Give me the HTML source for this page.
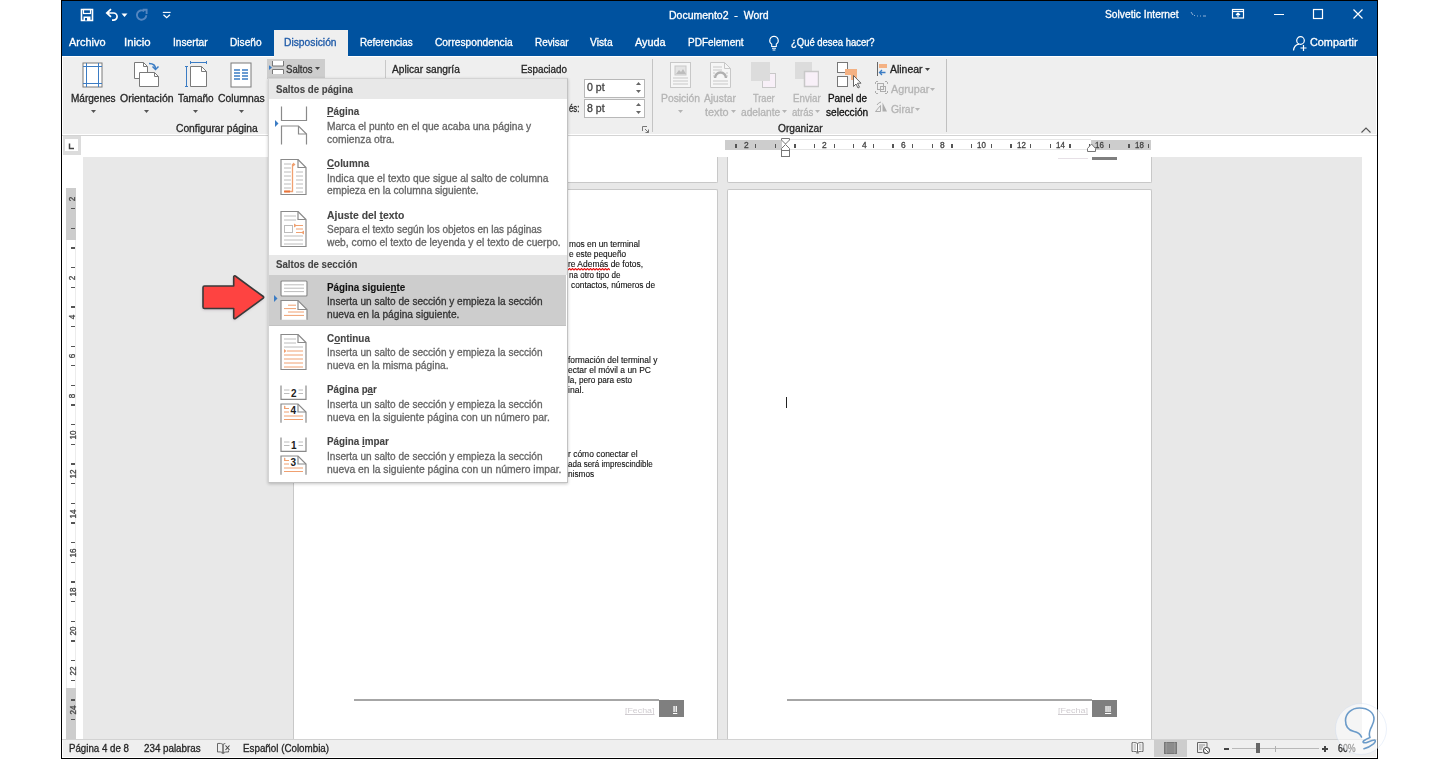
<!DOCTYPE html>
<html lang="es"><head><meta charset="utf-8"><title>Documento2 - Word</title>
<style>
html,body{margin:0;padding:0;background:#fff;}
body{width:1440px;height:759px;position:relative;overflow:hidden;font-family:"Liberation Sans", sans-serif;}
.r{position:absolute;display:block;}
.t{position:absolute;display:block;white-space:pre;line-height:16px;transform-origin:0 50%;font-family:"Liberation Sans", sans-serif;-webkit-text-stroke:0.3px;}
u{text-decoration:underline;text-underline-offset:1px;}
</style></head><body>
<div class="r" style="left:61px;top:0px;width:1317px;height:759px;background:#000;"></div>
<div class="r" style="left:62px;top:1px;width:1315px;height:757px;background:#fff;"></div>
<div class="r" style="left:62px;top:1px;width:1315px;height:55px;background:#00529f;"></div>
<div class="r" style="left:63px;top:57px;width:1313px;height:77px;background:#efefef;"></div>
<div class="r" style="left:62px;top:135px;width:1315px;height:1px;background:#d4d4d4;"></div>
<div class="r" style="left:83px;top:157px;width:1279px;height:582px;background:#e8e8e8;"></div>
<div class="r" style="left:62px;top:738.5px;width:1315px;height:1.5px;background:#d2d2d2;"></div>
<div class="r" style="left:63px;top:740px;width:1313px;height:17px;background:#efefef;"></div>
<span class="t" style="left:668.70px;top:7.54px;font-size:10px;color:#fff;transform:scaleX(1.0500);">Documento2  -  Word</span>
<span class="t" style="left:1104.70px;top:7.34px;font-size:10px;color:#fff;transform:scaleX(1.0262);">Solvetic Internet</span>
<svg class="r" style="left:80px;top:8px;" width="14" height="14" viewBox="0 0 14 14"><path d="M1.5 1.5h11v11h-11z" fill="none" stroke="#fff" stroke-width="1.6"/><rect x="3.5" y="1.5" width="7" height="4" fill="none" stroke="#fff" stroke-width="1.2"/><rect x="3.5" y="8.5" width="7" height="4" fill="#fff"/><rect x="5" y="10" width="2" height="2.5" fill="#00529f"/></svg>
<svg class="r" style="left:105px;top:8px;" width="14" height="14" viewBox="0 0 14 14"><path d="M6 1.2 L1.8 5 L6 8.8 M2 5 H8.5 A3.6 3.6 0 0 1 8.5 12.2 H7" fill="none" stroke="#fff" stroke-width="1.7"/></svg>
<svg class="r" style="left:121px;top:13px;" width="7" height="5" viewBox="0 0 7 5"><path d="M0.5 0.5h6l-3 3.5z" fill="#fff"/></svg>
<svg class="r" style="left:135px;top:8px;" width="14" height="14" viewBox="0 0 14 14"><path d="M9.300 3.200A4.700 4.700 0 1 0 11.300 7.300" fill="none" stroke="#5486c0" stroke-width="1.900"/><path d="M7.600 1.800h4v4.200" fill="none" stroke="#5486c0" stroke-width="1.900"/></svg>
<svg class="r" style="left:162px;top:11px;" width="10" height="8" viewBox="0 0 10 8"><path d="M0.800 1.400h7.800" stroke="#fff" stroke-width="1.100"/><path d="M1.500 3.800l3.200 2.900l3.200-2.900" fill="none" stroke="#fff" stroke-width="1.300"/></svg>
<svg class="r" style="left:1231px;top:8px;" width="14" height="12" viewBox="0 0 14 12"><rect x="1.5" y="1.5" width="11" height="8.5" fill="none" stroke="#fff" stroke-width="1.2"/><path d="M1.5 3.5h11" stroke="#fff" stroke-width="1.2"/><path d="M7 9v-3.500M5 7l2-2l2 2" fill="none" stroke="#fff" stroke-width="1.200"/></svg>
<div class="r" style="left:1274px;top:14px;width:10px;height:1px;background:#fff;"></div>
<svg class="r" style="left:1312px;top:8px;" width="12" height="12" viewBox="0 0 12 12"><rect x="1.5" y="1.5" width="9" height="9" fill="none" stroke="#fff" stroke-width="1.2"/></svg>
<svg class="r" style="left:1352px;top:8px;" width="12" height="12" viewBox="0 0 12 12"><path d="M1.5 1.5l9 9M10.5 1.5l-9 9" stroke="#fff" stroke-width="1.2"/></svg>
<svg class="r" style="left:1190px;top:11px;" width="18" height="7" viewBox="0 0 18 7"><path d="M1 1l2 3M4 4l1 1M7 5h1M10 5h1M13 5h3" stroke="#8fb0d6" stroke-width="1"/></svg>
<div class="r" style="left:274px;top:30px;width:74px;height:27px;background:#efefef;"></div>
<span class="t" style="left:68.70px;top:35.13px;font-size:10px;color:#fff;transform:scaleX(1.0971);">Archivo</span>
<span class="t" style="left:123.70px;top:35.13px;font-size:10px;color:#fff;transform:scaleX(1.1387);">Inicio</span>
<span class="t" style="left:172.70px;top:35.13px;font-size:10px;color:#fff;transform:scaleX(1.0205);">Insertar</span>
<span class="t" style="left:229.70px;top:35.13px;font-size:10px;color:#fff;transform:scaleX(1.0148);">Diseño</span>
<span class="t" style="left:359.70px;top:35.13px;font-size:10px;color:#fff;transform:scaleX(0.9858);">Referencias</span>
<span class="t" style="left:434.70px;top:35.13px;font-size:10px;color:#fff;transform:scaleX(1.0187);">Correspondencia</span>
<span class="t" style="left:534.70px;top:35.13px;font-size:10px;color:#fff;transform:scaleX(0.9910);">Revisar</span>
<span class="t" style="left:589.70px;top:35.13px;font-size:10px;color:#fff;transform:scaleX(1.0244);">Vista</span>
<span class="t" style="left:634.70px;top:35.13px;font-size:10px;color:#fff;transform:scaleX(1.0856);">Ayuda</span>
<span class="t" style="left:687.70px;top:35.13px;font-size:10px;color:#fff;transform:scaleX(1.0004);">PDFelement</span>
<span class="t" style="left:790.70px;top:35.13px;font-size:10px;color:#fff;transform:scaleX(0.9458);">¿Qué desea hacer?</span>
<span class="t" style="left:1309.70px;top:35.13px;font-size:10px;color:#fff;transform:scaleX(1.0841);">Compartir</span>
<span class="t" style="left:283.70px;top:35.13px;font-size:10px;color:#1e5aa8;transform:scaleX(1.0285);">Disposición</span>
<svg class="r" style="left:767.5px;top:35.3px;" width="12" height="17" viewBox="0 0 12 17"><path d="M6 1.2a4.3 4.3 0 0 0-2.3 7.9v2.4h4.6v-2.4A4.3 4.3 0 0 0 6 1.2z" fill="none" stroke="#fff" stroke-width="1.1"/><path d="M4 13.2h4M4.6 15h2.8" stroke="#fff" stroke-width="1.1"/></svg>
<svg class="r" style="left:1292px;top:35px;" width="16" height="17" viewBox="0 0 16 17"><circle cx="8.5" cy="5.5" r="3.8" fill="none" stroke="#fff" stroke-width="1.2"/><path d="M1.5 15.5c0.5-4 3-6 5.5-6.3" fill="none" stroke="#fff" stroke-width="1.2"/><path d="M11.5 10v6M8.5 13h6" stroke="#fff" stroke-width="1.2"/></svg>
<svg class="r" style="left:82px;top:62px;" width="21" height="26" viewBox="0 0 21 26"><rect x="1" y="1" width="19" height="24" fill="#fff" stroke="#7a7a7a" stroke-width="1"/><path d="M4.5 1v24M16.5 1v24M1 4.5h19M1 21.5h19" stroke="#3b7cc4" stroke-width="1" fill="none"/></svg>
<svg class="r" style="left:133px;top:61px;" width="27" height="27" viewBox="0 0 27 27"><path d="M1.5 1.5h9l4 4v12h-13z" fill="#fff" stroke="#7a7a7a"/><path d="M10.5 1.5v4h4" fill="none" stroke="#7a7a7a"/><path d="M6.500 11.500h15l4 4v10h-19z" fill="#fff" stroke="#7a7a7a"/><path d="M21.500 11.500v4h4" fill="none" stroke="#7a7a7a"/><path d="M16 2.500c4 0 6.500 1.500 6.500 5.500" fill="none" stroke="#3b7cc4" stroke-width="1.5"/><path d="M19.500 5.500l3 3l3-3" fill="none" stroke="#3b7cc4" stroke-width="1.500"/></svg>
<svg class="r" style="left:185px;top:61px;" width="23" height="27" viewBox="0 0 23 27"><path d="M5.500 5.500h11l5 5v15h-16z" fill="#fff" stroke="#7a7a7a"/><path d="M16.500 5.500v5h5" fill="none" stroke="#7a7a7a"/><path d="M5 1.500h17M5.500 0v3M21.500 0v3M1.500 5v21M0 5.500h3M0 25.500h3" stroke="#3b7cc4" fill="none"/></svg>
<svg class="r" style="left:230px;top:62px;" width="22" height="26" viewBox="0 0 22 26"><rect x="1" y="1" width="20" height="24" fill="#fff" stroke="#7a7a7a"/><path d="M4 8h6M4 11h6M4 14h6M4 17h6M12 8h6M12 11h6M12 14h6M12 17h6" stroke="#3b7cc4" stroke-width="1.4"/></svg>
<span class="t" style="left:70.70px;top:91.03px;font-size:10px;color:#262626;transform:scaleX(1.0030);">Márgenes</span>
<svg class="r" style="left:90.8px;top:110.2px;" width="5" height="3" viewBox="0 0 5 3"><path d="M0 0h5l-2.5 3z" fill="#555"/></svg>
<span class="t" style="left:119.70px;top:91.03px;font-size:10px;color:#262626;transform:scaleX(1.0481);">Orientación</span>
<svg class="r" style="left:143.8px;top:110.2px;" width="5" height="3" viewBox="0 0 5 3"><path d="M0 0h5l-2.5 3z" fill="#555"/></svg>
<span class="t" style="left:177.70px;top:91.03px;font-size:10px;color:#262626;transform:scaleX(1.0006);">Tamaño</span>
<svg class="r" style="left:193.0px;top:110.2px;" width="5" height="3" viewBox="0 0 5 3"><path d="M0 0h5l-2.5 3z" fill="#555"/></svg>
<span class="t" style="left:217.70px;top:91.03px;font-size:10px;color:#262626;transform:scaleX(1.0348);">Columnas</span>
<svg class="r" style="left:238.8px;top:110.2px;" width="5" height="3" viewBox="0 0 5 3"><path d="M0 0h5l-2.5 3z" fill="#555"/></svg>
<span class="t" style="left:175.70px;top:120.94px;font-size:10px;color:#262626;transform:scaleX(1.0264);">Configurar página</span>
<div class="r" style="left:267px;top:59px;width:58px;height:19.5px;background:#cdcdcd;"></div>
<svg class="r" style="left:269px;top:61px;" width="16" height="14" viewBox="0 0 16 14"><path d="M0 4.200l3 2.400l-3 2.400z" fill="#3b7cc4"/><path d="M3.500 0v5h11v-5M3.500 13v-4.500h11v4.500" fill="#fff" stroke="#777"/></svg>
<span class="t" style="left:285.70px;top:61.93px;font-size:10px;color:#333;transform:scaleX(0.9569);">Saltos</span>
<svg class="r" style="left:314.9px;top:66.8px;" width="5" height="3" viewBox="0 0 5 3"><path d="M0 0h5l-2.5 3z" fill="#444"/></svg>
<div class="r" style="left:385px;top:60px;width:1px;height:19px;background:#c8c8c8;"></div>
<div class="r" style="left:652px;top:59px;width:1px;height:73px;background:#c4c4c4;"></div>
<div class="r" style="left:946px;top:59px;width:1.3px;height:73px;background:#c0c0c0;"></div>
<span class="t" style="left:392.30px;top:61.83px;font-size:10px;color:#262626;transform:scaleX(1.0164);">Aplicar sangría</span>
<span class="t" style="left:520.70px;top:61.83px;font-size:10px;color:#262626;transform:scaleX(0.9849);">Espaciado</span>
<div class="r" style="left:584px;top:78.5px;width:61px;height:19.3px;background:#fff;box-sizing:border-box;border:1px solid #b8b8b8;"></div>
<span class="t" style="left:586.70px;top:80.33px;font-size:10px;color:#444;transform:scaleX(1.0547);">0 pt</span>
<svg class="r" style="left:635.5px;top:82.2px;" width="5" height="3" viewBox="0 0 5 3"><path d="M0 3l2.500-3l2.500 3z" fill="#666"/></svg>
<svg class="r" style="left:635.5px;top:90px;" width="5" height="3" viewBox="0 0 5 3"><path d="M0 0l2.500 3l2.500-3z" fill="#666"/></svg>
<div class="r" style="left:584px;top:99px;width:61px;height:19.3px;background:#fff;box-sizing:border-box;border:1px solid #b8b8b8;"></div>
<span class="t" style="left:586.70px;top:101.33px;font-size:10px;color:#444;transform:scaleX(1.0547);">8 pt</span>
<svg class="r" style="left:635.5px;top:103.2px;" width="5" height="3" viewBox="0 0 5 3"><path d="M0 3l2.500-3l2.500 3z" fill="#666"/></svg>
<svg class="r" style="left:635.5px;top:111px;" width="5" height="3" viewBox="0 0 5 3"><path d="M0 0l2.500 3l2.500-3z" fill="#666"/></svg>
<span class="t" style="left:569.40px;top:101.13px;font-size:10px;color:#262626;transform:scaleX(0.7719);">és:</span>
<svg class="r" style="left:642px;top:126px;" width="7" height="7" viewBox="0 0 7 7"><path d="M0.500 5v-4.500h4.500" fill="none" stroke="#777"/><path d="M3 3l3.500 3.500M6.500 3.500v3h-3" fill="none" stroke="#777"/></svg>
<svg class="r" style="left:670px;top:62px;" width="21" height="26" viewBox="0 0 21 26"><rect x="0.500" y="0.500" width="20" height="25" fill="#f6f6f6" stroke="#c8c8c8"/><rect x="5" y="4" width="11" height="9" fill="#e4e4e4" stroke="#c8c8c8"/><path d="M6 12l3-4l2 2l2-3l3 5z" fill="#bdbdbd"/><path d="M3 16h15M3 19h15M3 22h15" stroke="#c8c8c8"/></svg>
<svg class="r" style="left:710px;top:62px;" width="21" height="26" viewBox="0 0 21 26"><path d="M0.500 0.500h14l6 6v19h-20z" fill="#f6f6f6" stroke="#c8c8c8"/><path d="M14.500 0.500v6h6" fill="none" stroke="#c8c8c8"/><path d="M3 5h9M3 8h9M3 19h15M3 22h15" stroke="#c8c8c8"/><path d="M5 16a5.500 5.500 0 0 1 11 0" fill="none" stroke="#b0b0b0" stroke-width="2.500"/><path d="M3 11h2M16 11h2M3 14h1M17 14h1" stroke="#c8c8c8"/></svg>
<svg class="r" style="left:751px;top:62px;" width="25" height="26" viewBox="0 0 25 26"><rect x="11.500" y="11.500" width="13" height="14" fill="#f8f0f8" stroke="#c8c8c8"/><rect x="0" y="0" width="19" height="19" fill="#dcdcdc"/></svg>
<svg class="r" style="left:795px;top:62px;" width="24" height="26" viewBox="0 0 24 26"><rect x="0" y="0" width="17" height="17" fill="#dcdcdc"/><rect x="9.500" y="9.500" width="14" height="15" fill="#f8f0f8" stroke="#c8c8c8" stroke-width="1.500"/></svg>
<svg class="r" style="left:837px;top:62px;" width="25" height="27" viewBox="0 0 25 27"><rect x="0.500" y="0.500" width="10" height="10" fill="#fff" stroke="#777"/><rect x="0.500" y="14.500" width="10" height="10" fill="#fff" stroke="#777"/><rect x="8" y="7" width="12" height="6" fill="#f4b183"/><rect x="14" y="7" width="6" height="11" fill="#f4b183"/><path d="M16.500 13.500v11l2.500-2.500l2 4l1.500-0.800l-2-4h3.500z" fill="#fff" stroke="#555" stroke-width="0.900"/></svg>
<span class="t" style="left:661.20px;top:91.03px;font-size:10px;color:#b4b4b4;transform:scaleX(1.0340);">Posición</span>
<svg class="r" style="left:678.1px;top:110.0px;" width="5" height="3" viewBox="0 0 5 3"><path d="M0 0h5l-2.5 3z" fill="#b4b4b4"/></svg>
<span class="t" style="left:704.30px;top:91.03px;font-size:10px;color:#b4b4b4;transform:scaleX(1.0217);">Ajustar</span>
<span class="t" style="left:704.70px;top:104.63px;font-size:10px;color:#b4b4b4;transform:scaleX(1.0882);">texto</span>
<svg class="r" style="left:730.8px;top:110.0px;" width="5" height="3" viewBox="0 0 5 3"><path d="M0 0h5l-2.5 3z" fill="#b4b4b4"/></svg>
<span class="t" style="left:753.20px;top:91.03px;font-size:10px;color:#b4b4b4;transform:scaleX(0.9222);">Traer</span>
<span class="t" style="left:740.70px;top:104.63px;font-size:10px;color:#b4b4b4;transform:scaleX(1.0215);">adelante</span>
<svg class="r" style="left:781.5px;top:110.0px;" width="5" height="3" viewBox="0 0 5 3"><path d="M0 0h5l-2.5 3z" fill="#b4b4b4"/></svg>
<span class="t" style="left:793.00px;top:91.03px;font-size:10px;color:#b4b4b4;transform:scaleX(0.9767);">Enviar</span>
<span class="t" style="left:792.40px;top:104.63px;font-size:10px;color:#b4b4b4;transform:scaleX(0.9625);">atrás</span>
<svg class="r" style="left:815.2px;top:110.0px;" width="5" height="3" viewBox="0 0 5 3"><path d="M0 0h5l-2.5 3z" fill="#b4b4b4"/></svg>
<span class="t" style="left:828.20px;top:91.03px;font-size:10px;color:#111;transform:scaleX(0.9903);">Panel de</span>
<span class="t" style="left:826.40px;top:104.63px;font-size:10px;color:#111;transform:scaleX(1.0119);">selección</span>
<svg class="r" style="left:876px;top:62px;" width="11" height="14" viewBox="0 0 11 14"><path d="M1.500 0v14" stroke="#666"/><rect x="3" y="2" width="8" height="4" fill="#f4b183"/><path d="M3.500 10.500h6M6 8l-2.500 2.500l2.500 2.500" fill="none" stroke="#3b7cc4" stroke-width="1.300"/></svg>
<span class="t" style="left:890.30px;top:61.63px;font-size:10px;color:#222;transform:scaleX(1.0437);">Alinear</span>
<svg class="r" style="left:924.5px;top:68.0px;" width="5" height="3" viewBox="0 0 5 3"><path d="M0 0h5l-2.5 3z" fill="#444"/></svg>
<svg class="r" style="left:875px;top:81px;" width="13" height="13" viewBox="0 0 13 13"><rect x="2.500" y="2.500" width="6" height="6" fill="none" stroke="#adadad"/><rect x="5.500" y="5.500" width="5" height="5" fill="none" stroke="#adadad"/><path d="M0.500 3v-2.500h2.500M10 0.500h2.500v2.500M12.500 10v2.500h-2.500M3 12.500h-2.500v-2.500" fill="none" stroke="#adadad" stroke-dasharray="2 1"/></svg>
<span class="t" style="left:890.70px;top:81.73px;font-size:10px;color:#b4b4b4;transform:scaleX(1.0765);">Agrupar</span>
<svg class="r" style="left:929.5px;top:88.0px;" width="5" height="3" viewBox="0 0 5 3"><path d="M0 0h5l-2.5 3z" fill="#b4b4b4"/></svg>
<svg class="r" style="left:875px;top:101px;" width="13" height="12" viewBox="0 0 13 12"><path d="M0.500 10.500h5l0-6z" fill="none" stroke="#adadad"/><path d="M7.500 10.500v-9l4.500 9z" fill="#adadad"/><path d="M2 4a6 6 0 0 1 4-3" fill="none" stroke="#adadad"/></svg>
<span class="t" style="left:890.70px;top:101.53px;font-size:10px;color:#b4b4b4;transform:scaleX(1.0389);">Girar</span>
<svg class="r" style="left:914.5px;top:108.0px;" width="5" height="3" viewBox="0 0 5 3"><path d="M0 0h5l-2.5 3z" fill="#b4b4b4"/></svg>
<span class="t" style="left:777.70px;top:120.74px;font-size:10px;color:#262626;transform:scaleX(1.0158);">Organizar</span>
<svg class="r" style="left:1360.5px;top:126.5px;" width="10" height="6" viewBox="0 0 10 6"><path d="M0.500 5.500l4.500-4.500l4.500 4.500" fill="none" stroke="#555" stroke-width="1.100"/></svg>
<div class="r" style="left:63px;top:136px;width:18px;height:19px;background:#dcdcdc;"></div>
<div class="r" style="left:65px;top:139px;width:13px;height:12px;background:#fff;"></div>
<svg class="r" style="left:68px;top:143px;" width="7" height="7" viewBox="0 0 7 7"><path d="M1.500 0.500v5h4.500" fill="none" stroke="#444" stroke-width="1.500"/></svg>
<div class="r" style="left:725px;top:140px;width:57px;height:10px;background:#cdcdcd;"></div>
<div class="r" style="left:782px;top:139px;width:309px;height:11px;background:#fff;box-sizing:border-box;border-top:1.5px solid #e6e6e6;border-bottom:1px solid #e6e6e6;"></div>
<div class="r" style="left:1091px;top:140px;width:60px;height:10px;background:#cdcdcd;"></div>
<div class="r" style="left:735.27px;top:144px;width:1.3px;height:4.2px;background:#555;"></div>
<div class="r" style="left:754.92px;top:144px;width:1.3px;height:4.2px;background:#555;"></div>
<div class="r" style="left:774.57px;top:144px;width:1.3px;height:4.2px;background:#555;"></div>
<div class="r" style="left:794.23px;top:144px;width:1.3px;height:4.2px;background:#555;"></div>
<div class="r" style="left:813.88px;top:144px;width:1.3px;height:4.2px;background:#555;"></div>
<div class="r" style="left:833.52px;top:144px;width:1.3px;height:4.2px;background:#555;"></div>
<div class="r" style="left:853.17px;top:144px;width:1.3px;height:4.2px;background:#555;"></div>
<div class="r" style="left:872.82px;top:144px;width:1.3px;height:4.2px;background:#555;"></div>
<div class="r" style="left:892.48px;top:144px;width:1.3px;height:4.2px;background:#555;"></div>
<div class="r" style="left:912.12px;top:144px;width:1.3px;height:4.2px;background:#555;"></div>
<div class="r" style="left:931.77px;top:144px;width:1.3px;height:4.2px;background:#555;"></div>
<div class="r" style="left:951.42px;top:144px;width:1.3px;height:4.2px;background:#555;"></div>
<div class="r" style="left:971.07px;top:144px;width:1.3px;height:4.2px;background:#555;"></div>
<div class="r" style="left:990.73px;top:144px;width:1.3px;height:4.2px;background:#555;"></div>
<div class="r" style="left:1010.38px;top:144px;width:1.3px;height:4.2px;background:#555;"></div>
<div class="r" style="left:1030.02px;top:144px;width:1.3px;height:4.2px;background:#555;"></div>
<div class="r" style="left:1049.67px;top:144px;width:1.3px;height:4.2px;background:#555;"></div>
<div class="r" style="left:1069.32px;top:144px;width:1.3px;height:4.2px;background:#555;"></div>
<div class="r" style="left:1088.97px;top:144px;width:1.3px;height:4.2px;background:#555;"></div>
<div class="r" style="left:1108.62px;top:144px;width:1.3px;height:4.2px;background:#555;"></div>
<div class="r" style="left:1128.27px;top:144px;width:1.3px;height:4.2px;background:#555;"></div>
<div class="r" style="left:1147.92px;top:144px;width:1.3px;height:4.2px;background:#555;"></div>
<span class="t" style="left:743.66px;top:137.15px;font-size:8.5px;color:#444;transform:scaleX(0.9877);">2</span>
<span class="t" style="left:822.26px;top:137.15px;font-size:8.5px;color:#444;transform:scaleX(0.9877);">2</span>
<span class="t" style="left:861.56px;top:137.15px;font-size:8.5px;color:#444;transform:scaleX(0.9877);">4</span>
<span class="t" style="left:900.86px;top:137.15px;font-size:8.5px;color:#444;transform:scaleX(0.9877);">6</span>
<span class="t" style="left:940.16px;top:137.15px;font-size:8.5px;color:#444;transform:scaleX(0.9877);">8</span>
<span class="t" style="left:977.38px;top:137.15px;font-size:8.5px;color:#444;transform:scaleX(0.9339);">10</span>
<span class="t" style="left:1016.68px;top:137.15px;font-size:8.5px;color:#444;transform:scaleX(0.9339);">12</span>
<span class="t" style="left:1055.98px;top:137.15px;font-size:8.5px;color:#444;transform:scaleX(0.9339);">14</span>
<span class="t" style="left:1095.28px;top:137.15px;font-size:8.5px;color:#444;transform:scaleX(0.9339);">16</span>
<span class="t" style="left:1134.58px;top:137.15px;font-size:8.5px;color:#444;transform:scaleX(0.9339);">18</span>
<svg class="r" style="left:781px;top:138px;" width="9" height="19" viewBox="0 0 9 19"><path d="M0.500 0.500h8v1.500l-4 4l-4-4z" fill="#fff" stroke="#777"/><path d="M0.500 12.500v-2l4-4l4 4v2z" fill="#fff" stroke="#777"/><rect x="0.500" y="12.500" width="8" height="6" fill="#fff" stroke="#777"/></svg>
<svg class="r" style="left:1087px;top:143px;" width="10" height="10" viewBox="0 0 10 10"><path d="M0.500 8.500v-3l4-4.500l4 4.500v3z" fill="#fff" stroke="#777"/></svg>
<div class="r" style="left:66px;top:188px;width:10px;height:51.5px;background:#cdcdcd;"></div>
<div class="r" style="left:66px;top:239.5px;width:10px;height:448.5px;background:#fff;box-sizing:border-box;border-left:1px solid #ececec;border-right:1px solid #ececec;"></div>
<div class="r" style="left:66px;top:688px;width:10px;height:51px;background:#cdcdcd;"></div>
<div class="r" style="left:70.8px;top:207.97px;width:3.8px;height:1.3px;background:#555;"></div>
<div class="r" style="left:70.8px;top:227.62px;width:3.8px;height:1.3px;background:#555;"></div>
<div class="r" style="left:70.8px;top:247.27px;width:3.8px;height:1.3px;background:#555;"></div>
<div class="r" style="left:70.8px;top:266.93px;width:3.8px;height:1.3px;background:#555;"></div>
<div class="r" style="left:70.8px;top:286.58px;width:3.8px;height:1.3px;background:#555;"></div>
<div class="r" style="left:70.8px;top:306.23px;width:3.8px;height:1.3px;background:#555;"></div>
<div class="r" style="left:70.8px;top:325.88px;width:3.8px;height:1.3px;background:#555;"></div>
<div class="r" style="left:70.8px;top:345.52px;width:3.8px;height:1.3px;background:#555;"></div>
<div class="r" style="left:70.8px;top:365.18px;width:3.8px;height:1.3px;background:#555;"></div>
<div class="r" style="left:70.8px;top:384.83px;width:3.8px;height:1.3px;background:#555;"></div>
<div class="r" style="left:70.8px;top:404.48px;width:3.8px;height:1.3px;background:#555;"></div>
<div class="r" style="left:70.8px;top:424.12px;width:3.8px;height:1.3px;background:#555;"></div>
<div class="r" style="left:70.8px;top:443.77px;width:3.8px;height:1.3px;background:#555;"></div>
<div class="r" style="left:70.8px;top:463.43px;width:3.8px;height:1.3px;background:#555;"></div>
<div class="r" style="left:70.8px;top:483.07px;width:3.8px;height:1.3px;background:#555;"></div>
<div class="r" style="left:70.8px;top:502.73px;width:3.8px;height:1.3px;background:#555;"></div>
<div class="r" style="left:70.8px;top:522.38px;width:3.8px;height:1.3px;background:#555;"></div>
<div class="r" style="left:70.8px;top:542.02px;width:3.8px;height:1.3px;background:#555;"></div>
<div class="r" style="left:70.8px;top:561.67px;width:3.8px;height:1.3px;background:#555;"></div>
<div class="r" style="left:70.8px;top:581.33px;width:3.8px;height:1.3px;background:#555;"></div>
<div class="r" style="left:70.8px;top:600.98px;width:3.8px;height:1.3px;background:#555;"></div>
<div class="r" style="left:70.8px;top:620.62px;width:3.8px;height:1.3px;background:#555;"></div>
<div class="r" style="left:70.8px;top:640.27px;width:3.8px;height:1.3px;background:#555;"></div>
<div class="r" style="left:70.8px;top:659.92px;width:3.8px;height:1.3px;background:#555;"></div>
<div class="r" style="left:70.8px;top:679.57px;width:3.8px;height:1.3px;background:#555;"></div>
<div class="r" style="left:70.8px;top:699.23px;width:3.8px;height:1.3px;background:#555;"></div>
<div class="r" style="left:70.8px;top:718.88px;width:3.8px;height:1.3px;background:#555;"></div>
<span class="t" style="left:69.85px;top:191.10px;font-size:8.5px;color:#444;width:4.50px;transform-origin:50% 50%;transform:rotate(-90deg);"><span style="display:inline-block;transform-origin:0 50%;transform:scaleX(0.95)">2</span></span>
<span class="t" style="left:69.85px;top:269.70px;font-size:8.5px;color:#444;width:4.50px;transform-origin:50% 50%;transform:rotate(-90deg);"><span style="display:inline-block;transform-origin:0 50%;transform:scaleX(0.95)">2</span></span>
<span class="t" style="left:69.85px;top:309.00px;font-size:8.5px;color:#444;width:4.50px;transform-origin:50% 50%;transform:rotate(-90deg);"><span style="display:inline-block;transform-origin:0 50%;transform:scaleX(0.95)">4</span></span>
<span class="t" style="left:69.85px;top:348.30px;font-size:8.5px;color:#444;width:4.50px;transform-origin:50% 50%;transform:rotate(-90deg);"><span style="display:inline-block;transform-origin:0 50%;transform:scaleX(0.95)">6</span></span>
<span class="t" style="left:69.85px;top:387.60px;font-size:8.5px;color:#444;width:4.50px;transform-origin:50% 50%;transform:rotate(-90deg);"><span style="display:inline-block;transform-origin:0 50%;transform:scaleX(0.95)">8</span></span>
<span class="t" style="left:67.60px;top:426.90px;font-size:8.5px;color:#444;width:9.00px;transform-origin:50% 50%;transform:rotate(-90deg);"><span style="display:inline-block;transform-origin:0 50%;transform:scaleX(0.95)">10</span></span>
<span class="t" style="left:67.60px;top:466.20px;font-size:8.5px;color:#444;width:9.00px;transform-origin:50% 50%;transform:rotate(-90deg);"><span style="display:inline-block;transform-origin:0 50%;transform:scaleX(0.95)">12</span></span>
<span class="t" style="left:67.60px;top:505.50px;font-size:8.5px;color:#444;width:9.00px;transform-origin:50% 50%;transform:rotate(-90deg);"><span style="display:inline-block;transform-origin:0 50%;transform:scaleX(0.95)">14</span></span>
<span class="t" style="left:67.60px;top:544.80px;font-size:8.5px;color:#444;width:9.00px;transform-origin:50% 50%;transform:rotate(-90deg);"><span style="display:inline-block;transform-origin:0 50%;transform:scaleX(0.95)">16</span></span>
<span class="t" style="left:67.60px;top:584.10px;font-size:8.5px;color:#444;width:9.00px;transform-origin:50% 50%;transform:rotate(-90deg);"><span style="display:inline-block;transform-origin:0 50%;transform:scaleX(0.95)">18</span></span>
<span class="t" style="left:67.60px;top:623.40px;font-size:8.5px;color:#444;width:9.00px;transform-origin:50% 50%;transform:rotate(-90deg);"><span style="display:inline-block;transform-origin:0 50%;transform:scaleX(0.95)">20</span></span>
<span class="t" style="left:67.60px;top:662.70px;font-size:8.5px;color:#444;width:9.00px;transform-origin:50% 50%;transform:rotate(-90deg);"><span style="display:inline-block;transform-origin:0 50%;transform:scaleX(0.95)">22</span></span>
<span class="t" style="left:67.60px;top:702.00px;font-size:8.5px;color:#444;width:9.00px;transform-origin:50% 50%;transform:rotate(-90deg);"><span style="display:inline-block;transform-origin:0 50%;transform:scaleX(0.95)">24</span></span>
<div class="r" style="left:293px;top:157px;width:425px;height:26px;background:#fff;box-sizing:border-box;border:1px solid #c8c8c8;border-top:none;border-radius:0 0 2px 2px;"></div>
<div class="r" style="left:727px;top:157px;width:425px;height:26px;background:#fff;box-sizing:border-box;border:1px solid #c8c8c8;border-top:none;border-radius:0 0 2px 2px;"></div>
<div class="r" style="left:293px;top:189px;width:425px;height:549.5px;background:#fff;box-sizing:border-box;border:1px solid #c8c8c8;border-radius:2px 2px 0 0;border-bottom:none;"></div>
<div class="r" style="left:727px;top:189px;width:425px;height:549.5px;background:#fff;box-sizing:border-box;border:1px solid #c8c8c8;border-radius:2px 2px 0 0;border-bottom:none;"></div>
<div class="r" style="left:1092px;top:157px;width:25px;height:3px;background:#7f7f7f;"></div>
<div class="r" style="left:1058px;top:158px;width:30px;height:1px;background:#e6e0e6;"></div>
<span class="t" style="left:568.75px;top:236.02px;font-size:8.3px;color:#111;transform:scaleX(1.0048);-webkit-text-stroke:0.12px;">mos en un terminal</span>
<span class="t" style="left:568.75px;top:246.42px;font-size:8.3px;color:#111;transform:scaleX(0.9979);-webkit-text-stroke:0.12px;">e este pequeño</span>
<span class="t" style="left:568.25px;top:256.42px;font-size:8.3px;color:#111;transform:scaleX(1.0163);-webkit-text-stroke:0.12px;">re Además de fotos,</span>
<span class="t" style="left:568.75px;top:266.72px;font-size:8.3px;color:#111;transform:scaleX(0.9708);-webkit-text-stroke:0.12px;">na otro tipo de</span>
<span class="t" style="left:571.25px;top:277.02px;font-size:8.3px;color:#111;transform:scaleX(1.0007);-webkit-text-stroke:0.12px;">contactos, números de</span>
<span class="t" style="left:568.25px;top:351.62px;font-size:8.3px;color:#111;transform:scaleX(1.0150);-webkit-text-stroke:0.12px;">formación del terminal y</span>
<span class="t" style="left:568.25px;top:361.62px;font-size:8.3px;color:#111;transform:scaleX(1.0225);-webkit-text-stroke:0.12px;">ectar el móvil a un PC</span>
<span class="t" style="left:568.25px;top:371.72px;font-size:8.3px;color:#111;transform:scaleX(0.9910);-webkit-text-stroke:0.12px;">la, pero para esto</span>
<span class="t" style="left:568.25px;top:381.82px;font-size:8.3px;color:#111;transform:scaleX(1.0370);-webkit-text-stroke:0.12px;">inal.</span>
<span class="t" style="left:568.25px;top:446.12px;font-size:8.3px;color:#111;transform:scaleX(1.0198);-webkit-text-stroke:0.12px;">r cómo conectar el</span>
<span class="t" style="left:568.25px;top:456.42px;font-size:8.3px;color:#111;transform:scaleX(0.9677);-webkit-text-stroke:0.12px;">ada será imprescindible</span>
<span class="t" style="left:568.25px;top:466.12px;font-size:8.3px;color:#111;transform:scaleX(0.9968);-webkit-text-stroke:0.12px;">nismos</span>
<svg class="r" style="left:568px;top:267.8px;" width="42" height="3" viewBox="0 0 42 3"><path d="M0 2l1.500-1.500l1.500 1.500l1.500-1.500l1.500 1.500l1.500-1.500l1.500 1.500l1.500-1.500l1.500 1.500l1.500-1.500l1.500 1.500l1.500-1.500l1.500 1.500l1.500-1.500l1.500 1.500l1.500-1.500l1.500 1.500l1.500-1.500l1.500 1.500l1.500-1.500l1.500 1.500l1.500-1.500l1.500 1.500l1.500-1.500l1.500 1.500l1.500-1.500l1.500 1.500l1.500-1.500l1.500 1.500" fill="none" stroke="#e81010" stroke-width="1.100"/></svg>
<div class="r" style="left:786px;top:397px;width:1px;height:11px;background:#222;"></div>
<div class="r" style="left:354px;top:698.8px;width:305px;height:2px;background:#a6a6a6;"></div>
<div class="r" style="left:659px;top:700px;width:24.7px;height:16.7px;background:#7f7f7f;"></div>
<span class="t" style="left:624.76px;top:703.23px;font-size:8px;color:#d0ccd0;transform:scaleX(1.1046);text-decoration:underline;-webkit-text-stroke:0;">[Fecha]</span>
<span class="t" style="left:673.15px;top:701.45px;font-size:8.5px;color:#fff;font-weight:700;-webkit-text-stroke:0.1px;transform:scaleX(0.9077);text-decoration:underline;">II</span>
<div class="r" style="left:787px;top:698.8px;width:305px;height:2px;background:#a6a6a6;"></div>
<div class="r" style="left:1092px;top:700px;width:24.7px;height:16.7px;background:#7f7f7f;"></div>
<span class="t" style="left:1057.76px;top:703.23px;font-size:8px;color:#d0ccd0;transform:scaleX(1.1234);text-decoration:underline;-webkit-text-stroke:0;">[Fecha]</span>
<span class="t" style="left:1105.21px;top:701.45px;font-size:8.5px;color:#fff;font-weight:700;-webkit-text-stroke:0.1px;transform:scaleX(0.8719);text-decoration:underline;">III</span>
<div class="r" style="left:268px;top:78px;width:300px;height:405px;background:#fff;box-sizing:border-box;border:1px solid #c2c2c2;border-left-color:#d4d4d4;border-top-color:#d4d4d4;box-shadow:0 1px 3px rgba(0,0,0,0.22);"></div>
<div class="r" style="left:269px;top:79px;width:298px;height:20.4px;background:#e8e8e8;"></div>
<span class="t" style="left:276.10px;top:82.13px;font-size:10px;color:#444;font-weight:700;-webkit-text-stroke:0.1px;transform:scaleX(0.9689);">Saltos de página</span>
<div class="r" style="left:269px;top:254.8px;width:298px;height:20px;background:#e8e8e8;"></div>
<span class="t" style="left:276.00px;top:256.74px;font-size:10px;color:#444;font-weight:700;-webkit-text-stroke:0.1px;transform:scaleX(0.9647);">Saltos de sección</span>
<div class="r" style="left:269px;top:274.8px;width:297px;height:51px;background:#cdcdcd;box-sizing:border-box;border-bottom:1px solid #c2c2c2;"></div>
<span class="t" style="left:326.50px;top:104.03px;font-size:10px;color:#444;font-weight:700;-webkit-text-stroke:0.1px;transform:scaleX(0.9788);"><u>P</u>ágina</span>
<span class="t" style="left:326.90px;top:118.64px;font-size:10px;color:#666;transform:scaleX(1.0197);">Marca el punto en el que acaba una página y</span>
<span class="t" style="left:326.90px;top:131.53px;font-size:10px;color:#666;transform:scaleX(1.0306);">comienza otra.</span>
<span class="t" style="left:326.50px;top:155.94px;font-size:10px;color:#444;font-weight:700;-webkit-text-stroke:0.1px;transform:scaleX(0.9841);"><u>C</u>olumna</span>
<span class="t" style="left:326.90px;top:170.54px;font-size:10px;color:#666;transform:scaleX(1.0242);">Indica que el texto que sigue al salto de columna</span>
<span class="t" style="left:326.90px;top:183.44px;font-size:10px;color:#666;transform:scaleX(1.0220);">empieza en la columna siguiente.</span>
<span class="t" style="left:326.50px;top:207.73px;font-size:10px;color:#444;font-weight:700;-webkit-text-stroke:0.1px;transform:scaleX(1.0394);">Ajuste del <u>t</u>exto</span>
<span class="t" style="left:326.90px;top:222.34px;font-size:10px;color:#666;transform:scaleX(0.9983);">Separa el texto según los objetos en las páginas</span>
<span class="t" style="left:326.90px;top:235.23px;font-size:10px;color:#666;transform:scaleX(1.0254);">web, como el texto de leyenda y el texto de cuerpo.</span>
<span class="t" style="left:326.50px;top:279.64px;font-size:10px;color:#111;font-weight:700;-webkit-text-stroke:0.1px;transform:scaleX(0.9853);">Página siguie<u>n</u>te</span>
<span class="t" style="left:326.90px;top:294.24px;font-size:10px;color:#333;transform:scaleX(1.0044);">Inserta un salto de sección y empieza la sección</span>
<span class="t" style="left:326.90px;top:307.14px;font-size:10px;color:#333;transform:scaleX(1.0176);">nueva en la página siguiente.</span>
<span class="t" style="left:326.50px;top:330.64px;font-size:10px;color:#444;font-weight:700;-webkit-text-stroke:0.1px;transform:scaleX(0.9901);">C<u>o</u>ntinua</span>
<span class="t" style="left:326.90px;top:345.24px;font-size:10px;color:#666;transform:scaleX(1.0044);">Inserta un salto de sección y empieza la sección</span>
<span class="t" style="left:326.90px;top:358.14px;font-size:10px;color:#666;transform:scaleX(1.0173);">nueva en la misma página.</span>
<span class="t" style="left:326.50px;top:382.44px;font-size:10px;color:#444;font-weight:700;-webkit-text-stroke:0.1px;transform:scaleX(0.9738);">Página p<u>a</u>r</span>
<span class="t" style="left:326.90px;top:397.04px;font-size:10px;color:#666;transform:scaleX(1.0044);">Inserta un salto de sección y empieza la sección</span>
<span class="t" style="left:326.90px;top:409.94px;font-size:10px;color:#666;transform:scaleX(1.0301);">nueva en la siguiente página con un número par.</span>
<span class="t" style="left:326.50px;top:434.24px;font-size:10px;color:#444;font-weight:700;-webkit-text-stroke:0.1px;transform:scaleX(0.9855);">Página <u>i</u>mpar</span>
<span class="t" style="left:326.90px;top:448.84px;font-size:10px;color:#666;transform:scaleX(1.0044);">Inserta un salto de sección y empieza la sección</span>
<span class="t" style="left:326.90px;top:461.74px;font-size:10px;color:#666;transform:scaleX(1.0338);">nueva en la siguiente página con un número impar.</span>
<svg class="r" style="left:280px;top:106px;" width="28" height="39" viewBox="0 0 28 39"><path d="M1.500 0.500v14h25v-14" fill="none" stroke="#8a8a8a" stroke-width="1.200"/><path d="M1.500 38.500v-18.500h17l8 8v10.500" fill="none" stroke="#8a8a8a" stroke-width="1.200"/><path d="M18.500 20v8h8" fill="none" stroke="#8a8a8a" stroke-width="1.200"/></svg>
<svg class="r" style="left:274.5px;top:119.8px;" width="4" height="7" viewBox="0 0 4 7"><path d="M0 0l3.500 3.500l-3.500 3.500z" fill="#3b7cc4"/></svg>
<svg class="r" style="left:280px;top:159px;" width="28" height="37" viewBox="0 0 28 37"><path d="M1 0.500h17l8 8v27h-25z" fill="#fff" stroke="#8a8a8a" stroke-width="1.200"/><path d="M18 0.500v8h8" fill="none" stroke="#8a8a8a" stroke-width="1.200"/><path d="M4 5H11" stroke="#bcbcbc" stroke-width="1"/><path d="M4 9H11" stroke="#bcbcbc" stroke-width="1"/><path d="M4 13H11" stroke="#bcbcbc" stroke-width="1"/><path d="M4 17H11" stroke="#bcbcbc" stroke-width="1"/><path d="M4 21H11" stroke="#bcbcbc" stroke-width="1"/><path d="M4 25H11" stroke="#bcbcbc" stroke-width="1"/><path d="M4 29H11" stroke="#bcbcbc" stroke-width="1"/><path d="M16 13H23" stroke="#bcbcbc" stroke-width="1"/><path d="M16 17H23" stroke="#bcbcbc" stroke-width="1"/><path d="M16 21H23" stroke="#bcbcbc" stroke-width="1"/><path d="M16 25H23" stroke="#bcbcbc" stroke-width="1"/><path d="M16 29H23" stroke="#bcbcbc" stroke-width="1"/><path d="M16 33H23" stroke="#bcbcbc" stroke-width="1"/><path d="M5 32.500h7.500v-27h2" fill="none" stroke="#f0a070" stroke-width="1.300"/><path d="M4 32.500h6" stroke="#e8743b" stroke-width="2"/><path d="M13 3.500l2.500 2l-2.500 2z" fill="#f0a070"/></svg>
<svg class="r" style="left:280px;top:211px;" width="28" height="37" viewBox="0 0 28 37"><path d="M1 0.500h17l8 8v27h-25z" fill="#fff" stroke="#8a8a8a" stroke-width="1.200"/><path d="M18 0.500v8h8" fill="none" stroke="#8a8a8a" stroke-width="1.200"/><path d="M4 5H16" stroke="#bcbcbc" stroke-width="1"/><path d="M4 9H16" stroke="#bcbcbc" stroke-width="1"/><path d="M4 25H23" stroke="#bcbcbc" stroke-width="1"/><path d="M4 29H23" stroke="#bcbcbc" stroke-width="1"/><path d="M4 33H23" stroke="#bcbcbc" stroke-width="1"/><rect x="4.500" y="14.500" width="8" height="7" fill="#fff" stroke="#bcbcbc"/><path d="M16 14.5H23" stroke="#f0a070" stroke-width="1"/><path d="M16 18H23" stroke="#f0a070" stroke-width="1"/><path d="M16 21.5H23" stroke="#f0a070" stroke-width="1"/><path d="M14 12.500l3 2l-3 2zM24 19.500l-3 2l3 2z" fill="#f0a070"/></svg>
<svg class="r" style="left:280px;top:280px;" width="28" height="40" viewBox="0 0 28 40"><rect x="1" y="1" width="26" height="15" rx="1" fill="#fff" stroke="#8a8a8a" stroke-width="1.200"/><path d="M4 4.8H24" stroke="#bcbcbc" stroke-width="1"/><path d="M4 8.2H24" stroke="#bcbcbc" stroke-width="1"/><path d="M4 11.6H24" stroke="#bcbcbc" stroke-width="1"/><path d="M1 39.800v-19.300h17l9 9v10.300" fill="#fff" stroke="#8a8a8a" stroke-width="1.200"/><path d="M18 20.500v9h9" fill="none" stroke="#8a8a8a" stroke-width="1.200"/><path d="M8 25.2H16" stroke="#f0a070" stroke-width="1"/><path d="M4 28.6H16" stroke="#f0a070" stroke-width="1"/><path d="M8 32H24" stroke="#f0a070" stroke-width="1"/><path d="M4 35.4H24" stroke="#f0a070" stroke-width="1"/></svg>
<svg class="r" style="left:274.3px;top:295.3px;" width="4" height="7" viewBox="0 0 4 7"><path d="M0 0l3.500 3.500l-3.500 3.500z" fill="#3b7cc4"/></svg>
<svg class="r" style="left:280px;top:334px;" width="28" height="37" viewBox="0 0 28 37"><path d="M1 0.500h17l8 8v27h-25z" fill="#fff" stroke="#8a8a8a" stroke-width="1.200"/><path d="M18 0.500v8h8" fill="none" stroke="#8a8a8a" stroke-width="1.200"/><path d="M4 5H16" stroke="#bcbcbc" stroke-width="1"/><path d="M4 9H16" stroke="#bcbcbc" stroke-width="1"/><path d="M4 13H23" stroke="#bcbcbc" stroke-width="1"/><path d="M7 17H23" stroke="#f0a070" stroke-width="1"/><path d="M4 21H23" stroke="#f0a070" stroke-width="1"/><path d="M4 25H23" stroke="#f0a070" stroke-width="1"/><path d="M4 29H23" stroke="#f0a070" stroke-width="1"/><path d="M4 33H23" stroke="#f0a070" stroke-width="1"/><path d="M4 15l2.500 2l-2.500 2z" fill="#f0a070"/></svg>
<svg class="r" style="left:280px;top:385px;" width="28" height="39" viewBox="0 0 28 39"><path d="M1 0.500v13.800h25v-13.800" fill="#fff" stroke="#8a8a8a" stroke-width="1.200"/><path d="M4 5H9.5" stroke="#bcbcbc" stroke-width="1"/><path d="M4 8.5H9.5" stroke="#bcbcbc" stroke-width="1"/><path d="M18.5 5H23" stroke="#bcbcbc" stroke-width="1"/><path d="M18.5 8.5H23" stroke="#bcbcbc" stroke-width="1"/><text x="13.800" y="11.800" font-family="Liberation Sans, sans-serif" font-size="10" font-weight="700" fill="#222" text-anchor="middle">2</text><path d="M1 37.800v-18.800h17l8 8v10.800" fill="#fff" stroke="#8a8a8a" stroke-width="1.200"/><path d="M18 19v8h8" fill="none" stroke="#8a8a8a" stroke-width="1.200"/><path d="M4 23.5H9" stroke="#f0a070" stroke-width="1"/><path d="M4 27H9" stroke="#f0a070" stroke-width="1"/><path d="M4 31H23" stroke="#f0a070" stroke-width="1"/><path d="M4 34.5H23" stroke="#f0a070" stroke-width="1"/><path d="M4 20.500l2 1.500l-2 1.500z" fill="#f0a070"/><text x="13.300" y="28.800" font-family="Liberation Sans, sans-serif" font-size="10" font-weight="700" fill="#222" text-anchor="middle">4</text></svg>
<svg class="r" style="left:280px;top:436.6px;" width="28" height="39" viewBox="0 0 28 39"><path d="M1 0.500v13.800h25v-13.800" fill="#fff" stroke="#8a8a8a" stroke-width="1.200"/><path d="M4 5H9.5" stroke="#bcbcbc" stroke-width="1"/><path d="M4 8.5H9.5" stroke="#bcbcbc" stroke-width="1"/><path d="M18.5 5H23" stroke="#bcbcbc" stroke-width="1"/><path d="M18.5 8.5H23" stroke="#bcbcbc" stroke-width="1"/><text x="13.800" y="11.800" font-family="Liberation Sans, sans-serif" font-size="10" font-weight="700" fill="#222" text-anchor="middle">1</text><path d="M1 37.800v-18.800h17l8 8v10.800" fill="#fff" stroke="#8a8a8a" stroke-width="1.200"/><path d="M18 19v8h8" fill="none" stroke="#8a8a8a" stroke-width="1.200"/><path d="M4 23.5H9" stroke="#f0a070" stroke-width="1"/><path d="M4 27H9" stroke="#f0a070" stroke-width="1"/><path d="M4 31H23" stroke="#f0a070" stroke-width="1"/><path d="M4 34.5H23" stroke="#f0a070" stroke-width="1"/><path d="M4 20.500l2 1.500l-2 1.500z" fill="#f0a070"/><text x="13.300" y="28.800" font-family="Liberation Sans, sans-serif" font-size="10" font-weight="700" fill="#222" text-anchor="middle">3</text></svg>
<svg class="r" style="left:198px;top:271px;" width="72" height="54" viewBox="0 0 72 54"><defs><filter id="sh" x="-20%" y="-20%" width="140%" height="140%"><feGaussianBlur stdDeviation="1.500"/></filter></defs><path d="M6.5 15 h29.2 v-9.200 a1 1 0 0 1 1.600 -0.800 l28 20.500 a1 1 0 0 1 0 1.600 l-28 20.500 a1 1 0 0 1 -1.600 -0.800 v-9.300 h-29.200 a1.500 1.500 0 0 1 -1.500 -1.500 v-19.500 a1.500 1.500 0 0 1 1.500 -1.500z" fill="#503050" opacity="0.220" filter="url(#sh)" transform="translate(-0.500 1.500)"/><path d="M6.5 15 h29.2 v-9.200 a1 1 0 0 1 1.600 -0.800 l28 20.500 a1 1 0 0 1 0 1.600 l-28 20.500 a1 1 0 0 1 -1.600 -0.800 v-9.300 h-29.200 a1.500 1.500 0 0 1 -1.500 -1.500 v-19.500 a1.500 1.500 0 0 1 1.500 -1.500z" fill="#fe4341" stroke="#3a3a3a" stroke-width="1.600" stroke-linejoin="round"/></svg>
<span class="t" style="left:68.70px;top:740.53px;font-size:10px;color:#262626;transform:scaleX(0.9705);">Página 4 de 8</span>
<span class="t" style="left:144.20px;top:740.53px;font-size:10px;color:#262626;transform:scaleX(0.9788);">234 palabras</span>
<span class="t" style="left:243.20px;top:740.53px;font-size:10px;color:#262626;transform:scaleX(0.9803);">Español (Colombia)</span>
<span class="t" style="left:1337.70px;top:740.53px;font-size:10px;color:#262626;transform:scaleX(0.8793);">60%</span>
<svg class="r" style="left:217px;top:742px;" width="13" height="12" viewBox="0 0 13 12"><path d="M6 2.500c-1.500-1.200-3.500-1.200-5.500-1v8.500c2-0.200 4-0.200 5.500 1zM6 2.500v8.500" fill="none" stroke="#666" stroke-width="1"/><path d="M6 2.500c0.600-0.600 1.500-0.900 2.300-1M6 11c1.500-1 3.500-1.200 5.500-1v-1.500" fill="none" stroke="#666" stroke-width="1"/><path d="M8.500 3.500l4 4.500M12.500 3.500l-4 4.500" stroke="#444" stroke-width="1.100"/><path d="M4.500 11l1.500 1l1.500-1" fill="none" stroke="#666" stroke-width="0.800"/></svg>
<svg class="r" style="left:1131px;top:742px;" width="13" height="12" viewBox="0 0 13 12"><path d="M6.500 1.500c-1.500-1-3.500-1-5.500-0.800v8.800c2-0.200 4-0.200 5.500 0.800c1.500-1 3.500-1 5.500-0.800v-8.800c-2-0.200-4-0.200-5.500 0.800zM6.500 1.500v9" fill="#fff" stroke="#666" stroke-width="1"/><path d="M2.500 3h2.500M2.500 5h2.500M2.500 7h2.500M8 3h2.500M8 5h2.500M8 7h2.500" stroke="#888" stroke-width="0.800"/><path d="M5 10.500l1.500 1.300l1.500-1.300" fill="none" stroke="#666" stroke-width="0.800"/></svg>
<div class="r" style="left:1154px;top:740px;width:33px;height:17px;background:#cdcdcd;"></div>
<svg class="r" style="left:1164px;top:742px;" width="13" height="12" viewBox="0 0 13 12"><rect x="0.500" y="0.500" width="12" height="11" fill="#8c8c8c" stroke="#777"/><path d="M2.500 0.500v11M10.500 0.500v11" stroke="#a8a8a8" stroke-width="0.800" stroke-dasharray="1 1"/></svg>
<svg class="r" style="left:1197px;top:742px;" width="13" height="12" viewBox="0 0 13 12"><path d="M0.500 0.500h9.500v5M0.500 0.500v10h5" fill="none" stroke="#666"/><path d="M2 3h6M2 5h4M2 7h3" stroke="#888" stroke-width="0.900"/><circle cx="9.500" cy="8.500" r="3" fill="#fff" stroke="#555" stroke-width="1.100"/><path d="M7.500 6.500l4 4" stroke="#555" stroke-width="0.900"/></svg>
<div class="r" style="left:1224px;top:748px;width:5px;height:1.5px;background:#444;"></div>
<div class="r" style="left:1232px;top:748px;width:87px;height:1px;background:#b8b8b8;"></div>
<div class="r" style="left:1256px;top:743px;width:4px;height:10px;background:#666;"></div>
<div class="r" style="left:1275px;top:746px;width:1px;height:6px;background:#b0b0b0;"></div>
<div class="r" style="left:1321.5px;top:748px;width:6.5px;height:1.5px;background:#444;"></div>
<div class="r" style="left:1324px;top:745.5px;width:1.5px;height:6.5px;background:#444;"></div>
<svg class="r" style="left:1333px;top:698.8px;" width="56" height="56" viewBox="0 0 56 56"><circle cx="28" cy="30" r="25.500" fill="rgba(255,255,255,0.550)" stroke="rgba(200,215,240,0.600)" stroke-width="0.600"/><path d="M28.500 38c-1.500-3.500-4-4.800-7.500-5.500c-5-1-8.500-5-8.500-11c0-7 6-12.500 14-12.500c9 0 14.500 5 14.500 11c0 4-2 6.500-3.500 10c-1.200 3-1.800 5.500-0.500 8.500c-2 0.800-4.500 2-6.500 3.500c-1.500 1.500 1 2.500 4 1.200c3-1.200 5.500-2.200 7-2.200c1.500 0.300 0.800 2.200-1 3.800c-2.500 2-5.500 3.800-9.500 5" fill="none" stroke="#6b9bc9" stroke-width="1.600" stroke-linecap="round" stroke-linejoin="round"/></svg>
</body></html>
